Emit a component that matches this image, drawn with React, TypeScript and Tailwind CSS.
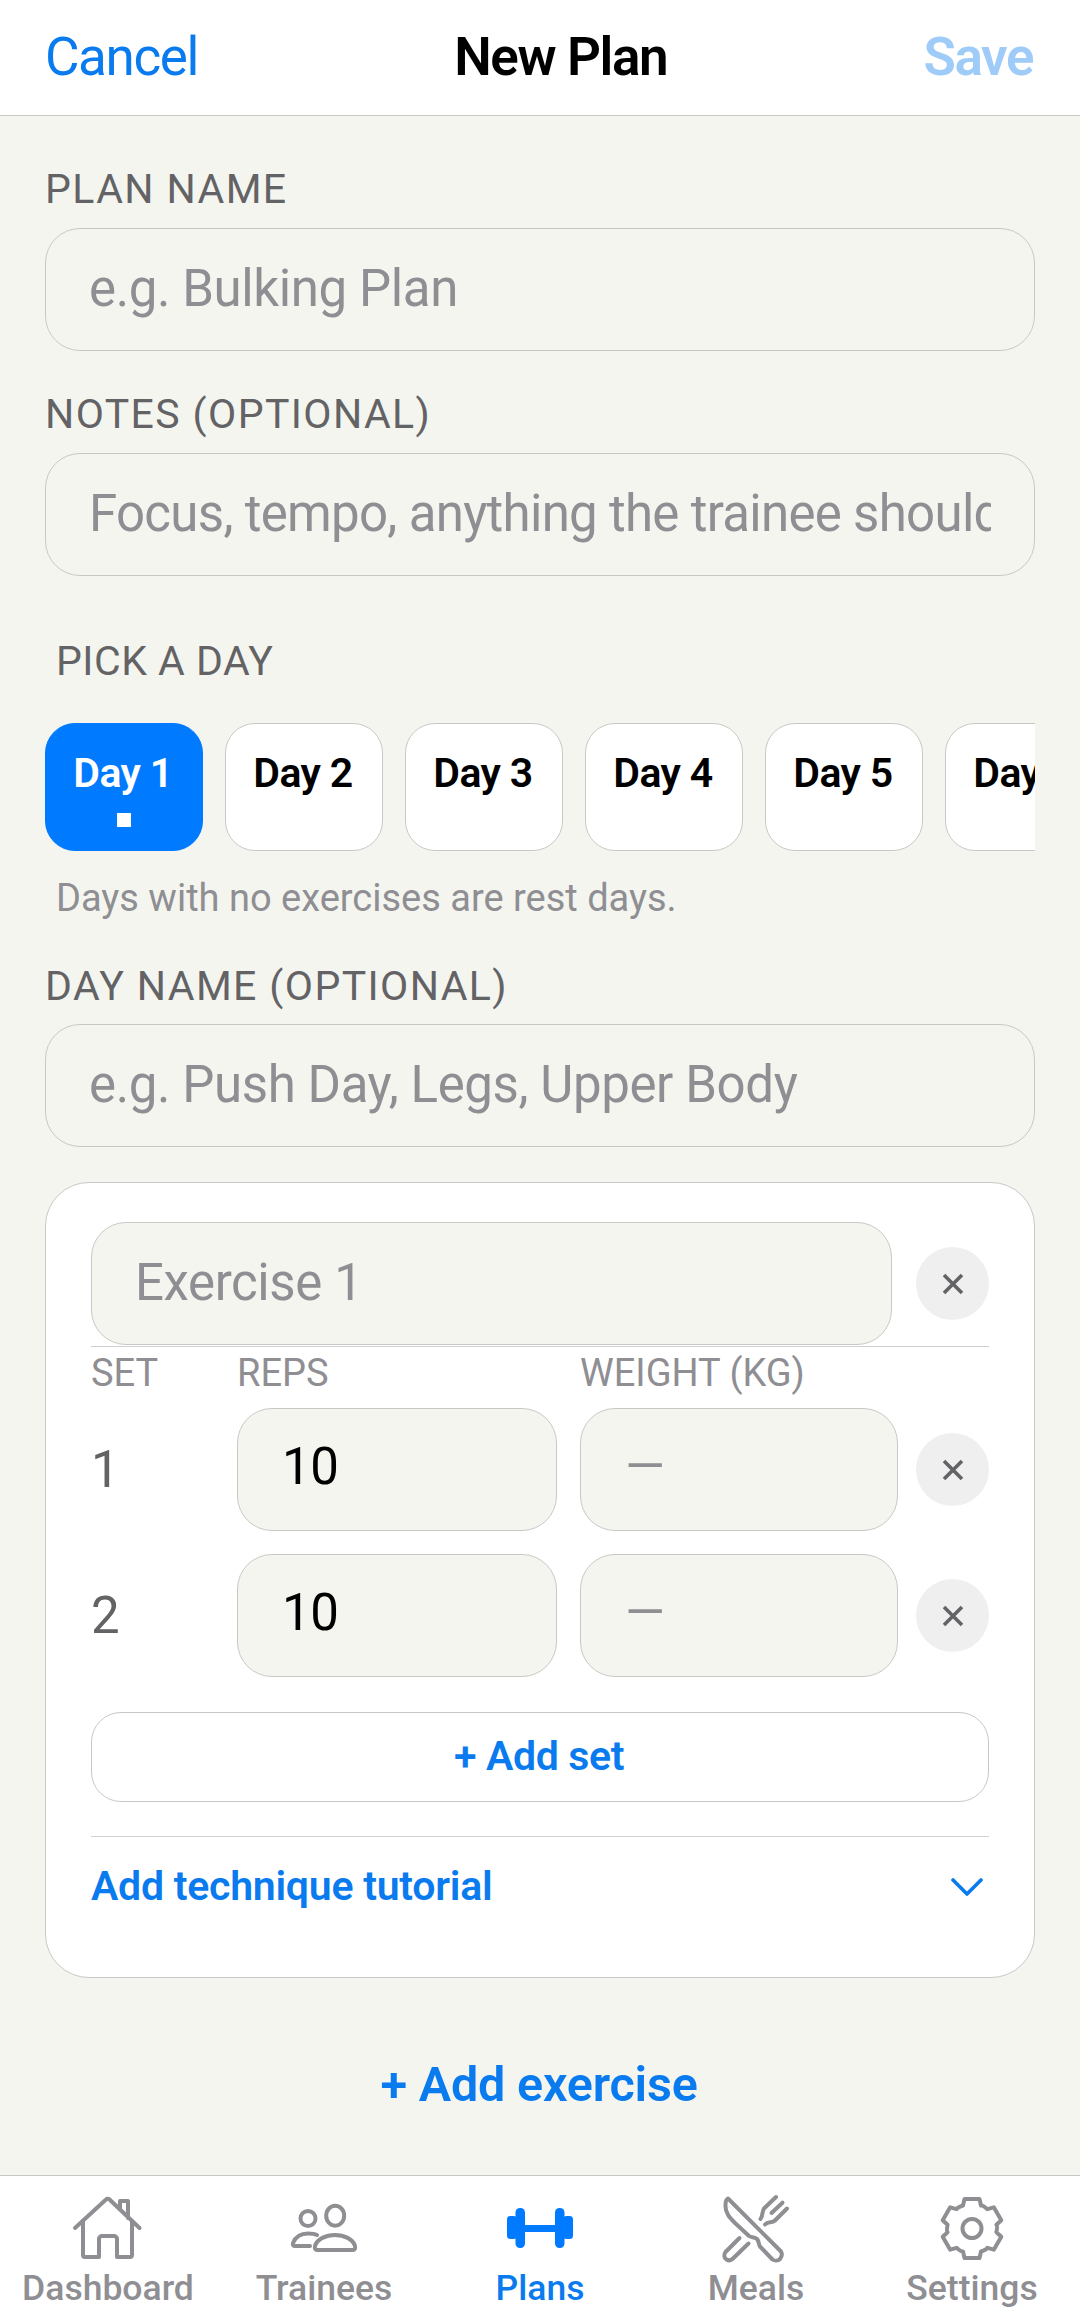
import React from 'react'

// ── Shared bits ───────────────────────────────────────────────────────────────
function Label({ children, className = 'tracking-[1.4px]' }: { children: React.ReactNode; className?: string }) {
  return <div className={`h-[46px] text-[41px] leading-[49px] text-[#636366] ${className}`}>{children}</div>
}

function TextInput({ placeholder, className = '' }: { placeholder: string; className?: string }) {
  return (
    <input
      readOnly
      placeholder={placeholder}
      className={`block h-[123px] rounded-[35px] border border-[#c8c8c6] bg-[#f5f5f0] px-[43px] pb-[2px] text-[51px] text-black outline-none placeholder:text-[#8e8e93] ${className}`}
    />
  )
}

function CloseButton() {
  return (
    <div className="flex h-[73px] w-[73px] shrink-0 items-center justify-center rounded-full bg-[#efeff0]">
      <svg width="24" height="24" viewBox="0 0 24 24" fill="none" stroke="#636366" strokeWidth="3.6">
        <path d="M3 3 21 21M21 3 3 21" />
      </svg>
    </div>
  )
}

function SetRow({ n }: { n: number }) {
  return (
    <div className="flex items-center">
      <div className="w-[146px] text-[51px] leading-none text-[#636366]">{n}</div>
      <div className="flex h-[123px] w-[320px] items-center rounded-[35px] border border-[#c8c8c6] bg-[#f5f5f0] pb-[4px] pl-[44px] text-[51px] tracking-[-0.4px] text-black">
        10
      </div>
      <div className="ml-[23px] flex h-[123px] w-[318px] items-center rounded-[35px] border border-[#c8c8c6] bg-[#f5f5f0] pb-[4px] pl-[44px] text-[51px] text-[#8e8e93]">
        —
      </div>
      <div className="ml-auto">
        <CloseButton />
      </div>
    </div>
  )
}

// ── Tab bar icons ─────────────────────────────────────────────────────────────
function gearPath() {
  const cx = 36
  const cy = 35.5
  const pts: string[] = []
  for (let i = 0; i < 6; i++) {
    const a = (i * Math.PI) / 3
    const at = (x: number, y: number) => {
      const px = cx + x * Math.cos(a) - y * Math.sin(a)
      const py = cy + x * Math.sin(a) + y * Math.cos(a)
      return `${px.toFixed(1)} ${py.toFixed(1)}`
    }
    pts.push(`${i === 0 ? 'M' : 'Q'}${i === 0 ? '' : at(-15, -21) + ' '}${at(-9, -23)}`)
    pts.push(`L${at(-7.5, -29.5)}`)
    pts.push(`L${at(7.5, -29.5)}`)
    pts.push(`L${at(9, -23)}`)
  }
  pts.push(`Q${(cx - 15).toFixed(1)} ${(cy - 21).toFixed(1)} ${(cx - 9).toFixed(1)} ${(cy - 23).toFixed(1)}Z`)
  return pts.join(' ')
}

function TabIcon({ name }: { name: string }) {
  const stroke = { fill: 'none', stroke: '#8e8e93', strokeWidth: 4, strokeLinecap: 'round', strokeLinejoin: 'round' } as const
  return (
    <svg width="72" height="72" viewBox="0 0 72 72">
      {name === 'home' && (
        <g {...stroke}>
          <path d="M3 35 34 6.5a2.5 2.5 0 0 1 3.5 0L67.5 35" />
          <path d="M11 28V62a2 2 0 0 0 2 2H27V46a3 3 0 0 1 3-3H42a3 3 0 0 1 3 3V64H58a2 2 0 0 0 2-2V28" />
          <path d="M48 15V8H56V25" />
        </g>
      )}
      {name === 'people' && (
        <g {...stroke}>
          <circle cx="20" cy="25.5" r="7.5" />
          <ellipse cx="47.2" cy="22.7" rx="9" ry="10" />
          <path d="M27 53C29 46 38 42 47 42S65 46 67 53C67.5 55.5 66.5 57 65 57H29C27.5 57 26.5 55.5 27 53Z" />
          <path d="M29 42C27 41 23 40.5 20 40.5 12 40.5 7 45 5 50 4.5 52 5.5 53 7 53H22" />
        </g>
      )}
      {name === 'dumbbell' && (
        <g fill="#007aff">
          <rect x="3" y="23" width="10" height="23" rx="3.5" />
          <rect x="11.5" y="15" width="9.5" height="40" rx="4.5" />
          <rect x="20" y="32" width="32" height="7" />
          <rect x="51" y="15" width="9.5" height="40" rx="4.5" />
          <rect x="59" y="23" width="10" height="23" rx="3.5" />
        </g>
      )}
      {name === 'meals' && (
        <g {...stroke}>
          <path d="M8 5.5 61 58.5C62.5 61 61.5 64 60 66 58 68 54.5 68 52.5 66.5L40 53.5C38.5 51.5 39 48 37 46 35 44 31 44.5 29 43L15 30C10 25 5 20 5.5 12 5.5 9 6 6.5 8 5.5Z" />
          <path d="M19.5 45 5.5 59C3.5 61.5 4 65 6.5 66.5 9 68 11.5 67 13 65.5L28.5 50.5" />
          <path d="M56 4 44 15.5C42 18 43 23 40.5 26" />
          <path d="M62.5 9.7 51.5 20" />
          <path d="M67 15.5 55 27.5C52 30.5 48 28 45 31.5" />
        </g>
      )}
      {name === 'settings' && (
        <g {...stroke}>
          <path d={gearPath()} />
          <circle cx="36" cy="35.5" r="9.5" />
        </g>
      )}
    </svg>
  )
}

const tabs = [
  { label: 'Dashboard', icon: 'home' },
  { label: 'Trainees', icon: 'people' },
  { label: 'Plans', icon: 'dumbbell', active: true },
  { label: 'Meals', icon: 'meals' },
  { label: 'Settings', icon: 'settings' },
]

const days = ['Day 1', 'Day 2', 'Day 3', 'Day 4', 'Day 5', 'Day 6']

// ── Page ──────────────────────────────────────────────────────────────────────
export default function App() {
  return (
    <div className="flex h-[2313px] w-[1080px] flex-col overflow-hidden bg-[#f5f5f0] [font-family:Roboto,sans-serif]">
      {/* Header */}
      <header className="flex h-[116px] shrink-0 items-center justify-between border-b border-[#c8c8c6] bg-white pr-[47px] pl-[45px] text-[53px] tracking-[-1.4px]">
        <span className="text-[#0a7bef]">Cancel</span>
        <span className="font-semibold text-black">New Plan</span>
        <span className="font-semibold text-[#9fcbf9]">Save</span>
      </header>

      <main className="flex min-h-0 flex-1 flex-col px-[45px] pt-[49px]">
        <Label>PLAN NAME</Label>
        <TextInput placeholder="e.g. Bulking Plan" className="mt-[17px] w-full tracking-[-0.4px]" />

        <Label className="mt-[39px] tracking-[1.4px]">NOTES (OPTIONAL)</Label>
        <TextInput
          placeholder="Focus, tempo, anything the trainee should know"
          className="mt-[17px] w-full tracking-[-0.7px]"
        />

        <Label className="mt-[61px] pl-[11px] tracking-[0.5px]">PICK A DAY</Label>

        {/* Day strip, cut off at the right edge like a scroller */}
        <div className="mt-[40px] flex gap-[22px] overflow-hidden">
          {days.map((day, i) => (
            <div
              key={day}
              className={`flex h-[128px] w-[158px] shrink-0 flex-col items-center rounded-[30px] border pt-[25px] pr-[2px] text-[41px] leading-[48px] font-semibold tracking-[-0.6px] ${
                i === 0 ? 'border-[#007aff] bg-[#007aff] text-white' : 'border-[#c8c8c6] bg-white text-black'
              }`}
            >
              {day}
              {i === 0 && <span className="mt-[16px] ml-[2px] h-[14px] w-[14px] bg-white" />}
            </div>
          ))}
        </div>

        <div className="mt-[24px] h-[46px] pl-[11px] text-[38px] leading-[46px] text-[#8e8e93]">
          Days with no exercises are rest days.
        </div>

        <Label className="mt-[41px] tracking-[1.4px]">DAY NAME (OPTIONAL)</Label>
        <TextInput placeholder="e.g. Push Day, Legs, Upper Body" className="mt-[16px] w-full tracking-[-0.4px]" />

        {/* Exercise card */}
        <section className="mt-[35px] h-[796px] shrink-0 rounded-[44px] border border-[#c8c8c6] bg-white px-[45px] pt-[39px]">
          <div className="flex items-center justify-between">
            <TextInput placeholder="Exercise 1" className="w-[801px] tracking-[-0.4px]" />
            <CloseButton />
          </div>
          <div className="mt-px h-px bg-[#d1d1d1]" />
          <div className="mt-[3px] flex h-[46px] items-center text-[38px] text-[#8e8e93]">
            <span className="w-[146px]">SET</span>
            <span className="w-[343px]">REPS</span>
            <span>WEIGHT (KG)</span>
          </div>
          <div className="mt-[12px] flex flex-col gap-[23px]">
            <SetRow n={1} />
            <SetRow n={2} />
          </div>
          <div className="mt-[35px] flex h-[90px] items-center justify-center rounded-[30px] border border-[#c8c8c6] bg-white pr-[2px] text-[41px] font-semibold tracking-[-0.35px] text-[#0a7bef]">
            + Add set
          </div>
          <div className="mt-[34px] flex h-[100px] items-center justify-between border-t border-[#d1d1d1] text-[41px] font-semibold tracking-[-0.25px] text-[#0a7bef]">
            <span>Add technique tutorial</span>
            <svg className="mr-[6px]" width="32" height="20" viewBox="0 0 32 20" fill="none" stroke="#0a7bef" strokeWidth="3.6" strokeLinecap="round" strokeLinejoin="round">
              <path d="M2 3 16 17 30 3" />
            </svg>
          </div>
        </section>

        <div className="mt-[77px] pr-[2px] text-center text-[48.5px] leading-[60px] font-semibold tracking-[-0.2px] text-[#0a7bef]">+ Add exercise</div>
      </main>

      {/* Tab bar */}
      <nav className="grid h-[138px] shrink-0 grid-cols-5 border-t border-[#c8c8c6] bg-white pt-[17px]">
        {tabs.map((tab) => (
          <div key={tab.label} className="flex flex-col items-center">
            <TabIcon name={tab.icon} />
            <span className={`text-[35.5px] leading-[46px] font-medium ${tab.active ? 'text-[#0a7bef]' : 'text-[#8e8e93]'}`}>
              {tab.label}
            </span>
          </div>
        ))}
      </nav>
    </div>
  )
}
